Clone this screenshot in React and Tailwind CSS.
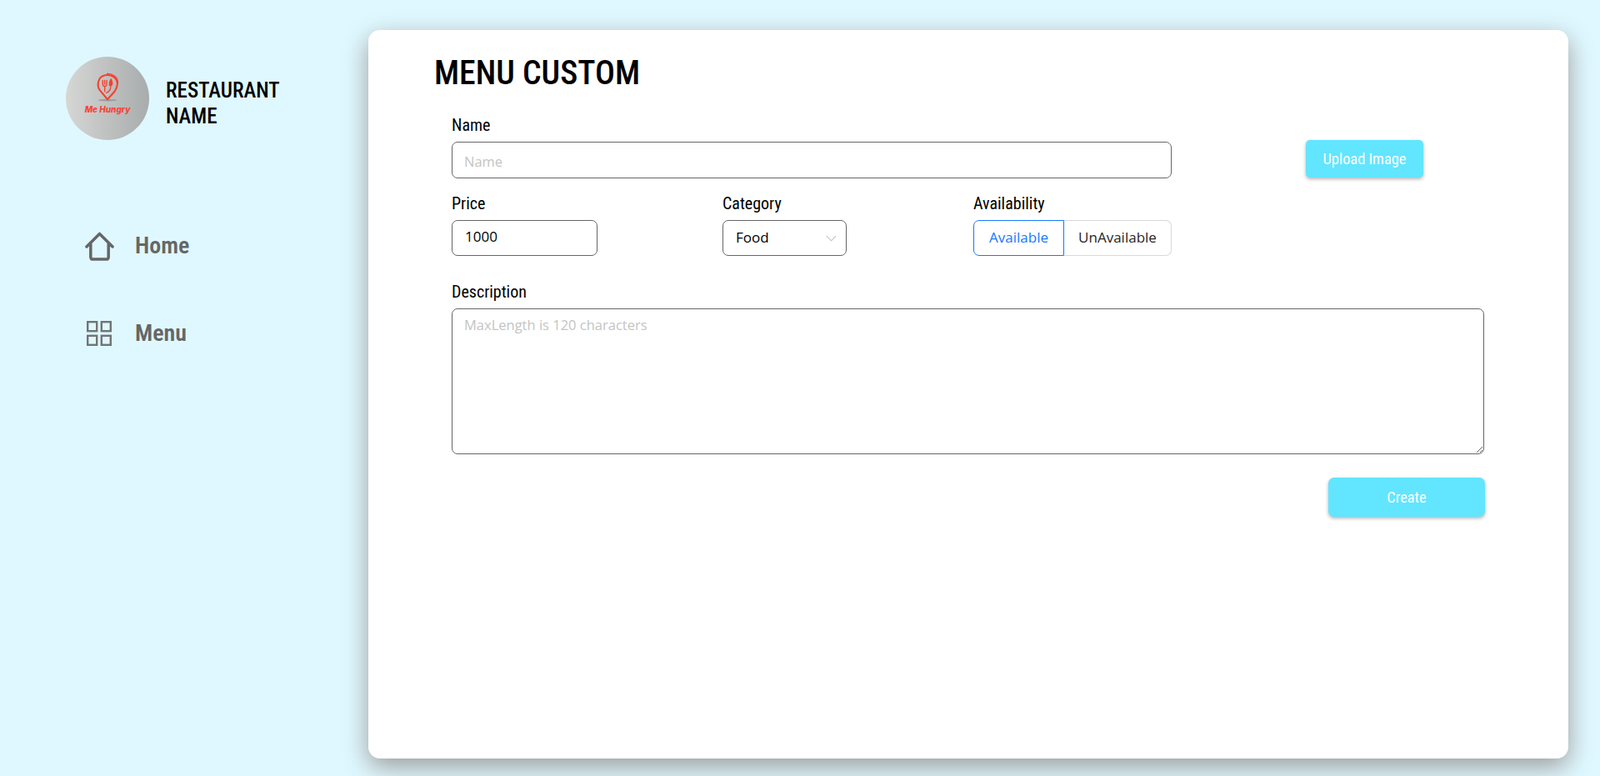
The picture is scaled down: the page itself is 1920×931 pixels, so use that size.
import React from "react";

const cond = "font-['Roboto'] [font-stretch:75%]";
const body = "font-['Open_Sans','Noto_Sans',sans-serif]";

function Logo() {
  return (
    <div className="relative w-[100px] h-[100px] rounded-full bg-gradient-to-r from-[#d6d7d5] to-[#a8acac] shrink-0">
      <svg viewBox="0 0 30 38" className="absolute left-[35px] top-[19px] w-[30px] h-[36px]" fill="none">
        <ellipse cx="15" cy="35" rx="12" ry="1.3" fill="#9a9c9b" />
        <path d="M15 34 L5 22 C1 16 3 5 12 3.5 C20 2 28 7 27.5 15 C27.3 19 26 21 24 24 Z" stroke="#f5412f" strokeWidth="2.2" strokeLinejoin="round" />
        <path d="M14 1.5 C21 1 29 6 28 14" stroke="#f5412f" strokeWidth="1.4" />
        <path d="M9 10 V15 C9 17 11 17.5 11.5 17.5 V24 M11.5 10 V15 M14 10 V15 C14 17 12 17.5 11.5 17.5" stroke="#f5412f" strokeWidth="1.4" strokeLinecap="round" />
        <path d="M19.5 7 C22 11 23 16 19 18 C15.5 17 16.5 11 19.5 7 Z" fill="#f5412f" />
        <path d="M19 18 C19 22 16 25 13 26" stroke="#f5412f" strokeWidth="1.4" />
      </svg>
      <div className="absolute left-0 right-0 top-[57px] text-center italic font-extrabold text-[10px] leading-[12px] text-[#f5443a] font-['Inter',sans-serif]">Me Hungry</div>
    </div>
  );
}

function Label({ children, className = "" }) {
  return <div className={`${cond} text-[20px] leading-[24px] text-black mb-[8px] ${className}`}>{children}</div>;
}

function NavItem({ icon, label, className }) {
  return (
    <div className={`flex items-center ${className}`}>
      <div className="w-[36px] mr-[25px] flex justify-center">{icon}</div>
      <span className={`${cond} font-semibold text-[28px] leading-[36px] text-[#666666]`}>{label}</span>
    </div>
  );
}

export default function App() {
  return (
    <div className="flex items-start w-full h-[931px] overflow-hidden bg-[#dff8ff]">
      <aside className="w-[442px] shrink-0">
        <div className="flex items-center gap-[20px] pl-[79px] pt-[68px]">
          <Logo />
          <div className={`${cond} font-medium text-[25px] leading-[31px] text-black mt-[12px]`}>
            RESTAURANT<br />NAME
          </div>
        </div>
        <nav className="pl-[101px] pt-[109px]">
          <NavItem
            className="h-[36px]"
            label="Home"
            icon={
              <svg viewBox="0 0 36 36" className="w-[35px] h-[35px]" fill="none" stroke="#666666" strokeWidth="3.6" strokeLinejoin="round" strokeLinecap="round">
                <path d="M2 18.5 L18 2.5 L34 18.5 M7 15 V31 C7 33 8 34 10 34 H26 C28 34 29 33 29 31 V15" />
              </svg>
            }
          />
          <NavItem
            className="h-[36px] mt-[69px]"
            label="Menu"
            icon={
              <svg viewBox="0 0 30 30" className="w-[30px] h-[30px]" fill="none" stroke="#737373" strokeWidth="2.4">
                <rect x="1.2" y="1.2" width="11" height="11" />
                <rect x="17.8" y="1.2" width="11" height="11" />
                <rect x="1.2" y="17.8" width="11" height="11" />
                <rect x="17.8" y="17.8" width="11" height="11" />
              </svg>
            }
          />
        </nav>
      </aside>

      <main className="w-[1440px] h-[874px] mt-[36px] bg-white rounded-[14px] shadow-[0_10px_30px_#9c9c9c] pl-[80px] pt-[27px]">
        <h1 className={`${cond} font-medium text-[39.8px] leading-[50px] text-black -ml-[1px]`}>MENU CUSTOM</h1>

        <div className="pl-[20px] w-[1280px]">
          <div className="flex items-end mt-[25px]">
            <div className="w-[864px]">
              <Label>Name</Label>
              <input
                readOnly
                placeholder="Name"
                className={`${body} block w-full h-[44px] px-[14px] pt-[2px] border border-[#666666] rounded-[7px] text-[16.5px] text-black outline-none placeholder:text-[#c4c4c4]`}
              />
            </div>
            <button className={`${cond} ml-[161px] mb-[1px] w-[141px] h-[45px] rounded-[5px] bg-[#62e5ff] text-white font-normal text-[18.4px] shadow-[0_2px_4px_rgba(0,0,0,0.3)]`}>
              Upload Image
            </button>
          </div>

          <div className="flex mt-[18px]">
            <div className="w-[325px]">
              <Label>Price</Label>
              <input
                readOnly
                value="1000"
                className={`${body} block w-[175px] h-[43px] px-[15px] pb-[5px] border border-[#666666] rounded-[7px] text-[17px] text-black outline-none`}
              />
            </div>
            <div className="w-[301px]">
              <Label>Category</Label>
              <div className={`${body} flex items-center justify-between w-[149px] h-[43px] pl-[15px] pr-[11px] pb-[2px] border border-[#666666] rounded-[7px] text-[17px] text-black`}>
                <span>Food</span>
                <svg viewBox="0 0 14 8" className="w-[13px] h-[8px] mt-[2px]" fill="none" stroke="#bfbfbf" strokeWidth="1.1">
                  <path d="M1 1 L7 7 L13 1" />
                </svg>
              </div>
            </div>
            <div>
              <Label>Availability</Label>
              <div className={`${body} flex h-[43px] text-[17px]`}>
                <div className="w-[109px] pb-[2px] flex items-center justify-center border border-[#1677ff] rounded-l-[7px] text-[#1677ff]">Available</div>
                <div className="w-[129px] pb-[2px] flex items-center justify-center border border-l-0 border-[#d9d9d9] rounded-r-[7px] text-[#262626]">UnAvailable</div>
              </div>
            </div>
          </div>

          <div className="mt-[31px]">
            <Label>Description</Label>
            <textarea
              readOnly
              placeholder="MaxLength is 120 characters"
              className={`${body} block w-[1239px] h-[175px] px-[14px] py-[7px] border border-[#666666] rounded-[7px] text-[16.5px] text-black outline-none placeholder:text-[#c4c4c4]`}
            />
          </div>

          <div className="flex justify-start mt-[28px] ml-[1052px]">
            <button className={`${cond} w-[188px] h-[47px] rounded-[7px] bg-[#62e5ff] text-white font-normal text-[18.4px] shadow-[0_2px_4px_rgba(0,0,0,0.3)]`}>
              Create
            </button>
          </div>
        </div>
      </main>
    </div>
  );
}
